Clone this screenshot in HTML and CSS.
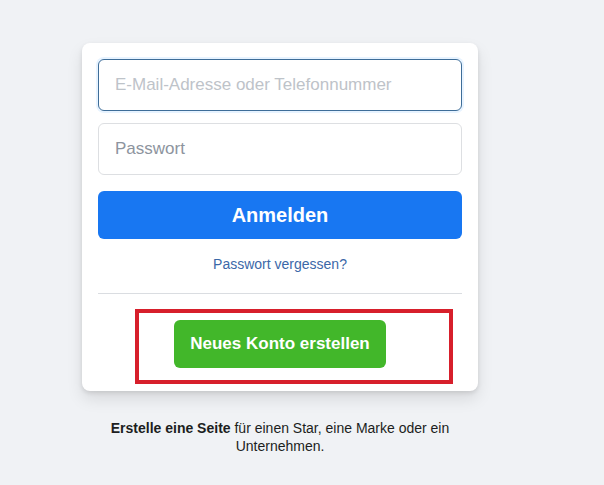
FILE: index.html
```html
<!DOCTYPE html>
<html lang="de">
<head>
<meta charset="utf-8">
<link rel="stylesheet" href="styles.css">
</head>
<body>
<div class="wrap">
  <form class="card">
    <input class="field focused" type="text" placeholder="E-Mail-Adresse oder Telefonnummer">
    <input class="field" type="password" placeholder="Passwort">
    <button type="button" class="login">Anmelden</button>
    <a class="forgot" href="#">Passwort vergessen?</a>
    <div class="divider"></div>
    <div class="create-row">
      <button type="button" class="create">Neues Konto erstellen</button>
      <div class="highlight"></div>
    </div>
  </form>
  <p class="footer"><b>Erstelle eine Seite</b> für einen Star, eine Marke oder ein Unternehmen.</p>
</div>
</body>
</html>
```
FILE: styles.css
```css
html, body {
  margin: 0;
  padding: 0;
  background: #f0f2f5;
  font-family: "Liberation Sans", Arial, Helvetica, sans-serif;
}
.wrap {
  width: 396px;
  margin: 43px 0 0 82px;
}
.card {
  background: #fff;
  border-radius: 8px;
  box-shadow: 0 2px 4px rgba(0,0,0,.1), 0 8px 16px rgba(0,0,0,.1);
  padding: 16px 16px 17px;
  display: flex;
  flex-direction: column;
  box-sizing: border-box;
}
.field {
  height: 52px;
  box-sizing: border-box;
  border: 1px solid #dddfe2;
  border-radius: 6px;
  padding: 14px 16px;
  font-size: 17px;
  font-family: inherit;
  color: #1d2129;
  margin-bottom: 12px;
  outline: none;
}
.field::placeholder { color: #8d949e; }
.field.focused {
  border-color: #3e6d98;
  box-shadow: 0 0 0 2px #e7f3ff;
  caret-color: #1c1e21;
}
.field.focused::placeholder { color: #bec3c9; }
.login {
  margin-top: 4px;
  height: 48px;
  border: none;
  border-radius: 6px;
  background: #1877f2;
  color: #fff;
  font-family: inherit;
  font-size: 20px;
  font-weight: bold;
}
.forgot {
  margin-top: 16px;
  text-align: center;
  color: #3b68a8;
  font-size: 14px;
  line-height: 19px;
  text-decoration: none;
}
.divider {
  border-bottom: 1px solid #dadde1;
  margin: 19px 0 20px;
}
.create-row {
  position: relative;
  display: flex;
  justify-content: center;
  padding: 6px 0;
}
.create {
  height: 48px;
  padding: 0 16px;
  border: none;
  border-radius: 6px;
  background: #42b72a;
  color: #fff;
  font-family: inherit;
  font-size: 17px;
  font-weight: bold;
}
.highlight {
  position: absolute;
  left: 37px;
  top: -5px;
  width: 318px;
  height: 75px;
  box-sizing: border-box;
  border: 4px solid #d71f2b;
  pointer-events: none;
}
.footer {
  margin: 28px 0 0;
  padding: 0 14px;
  text-align: center;
  font-size: 14px;
  line-height: 18px;
  color: #1c1e21;
}
.footer b { font-weight: bold; }
```
